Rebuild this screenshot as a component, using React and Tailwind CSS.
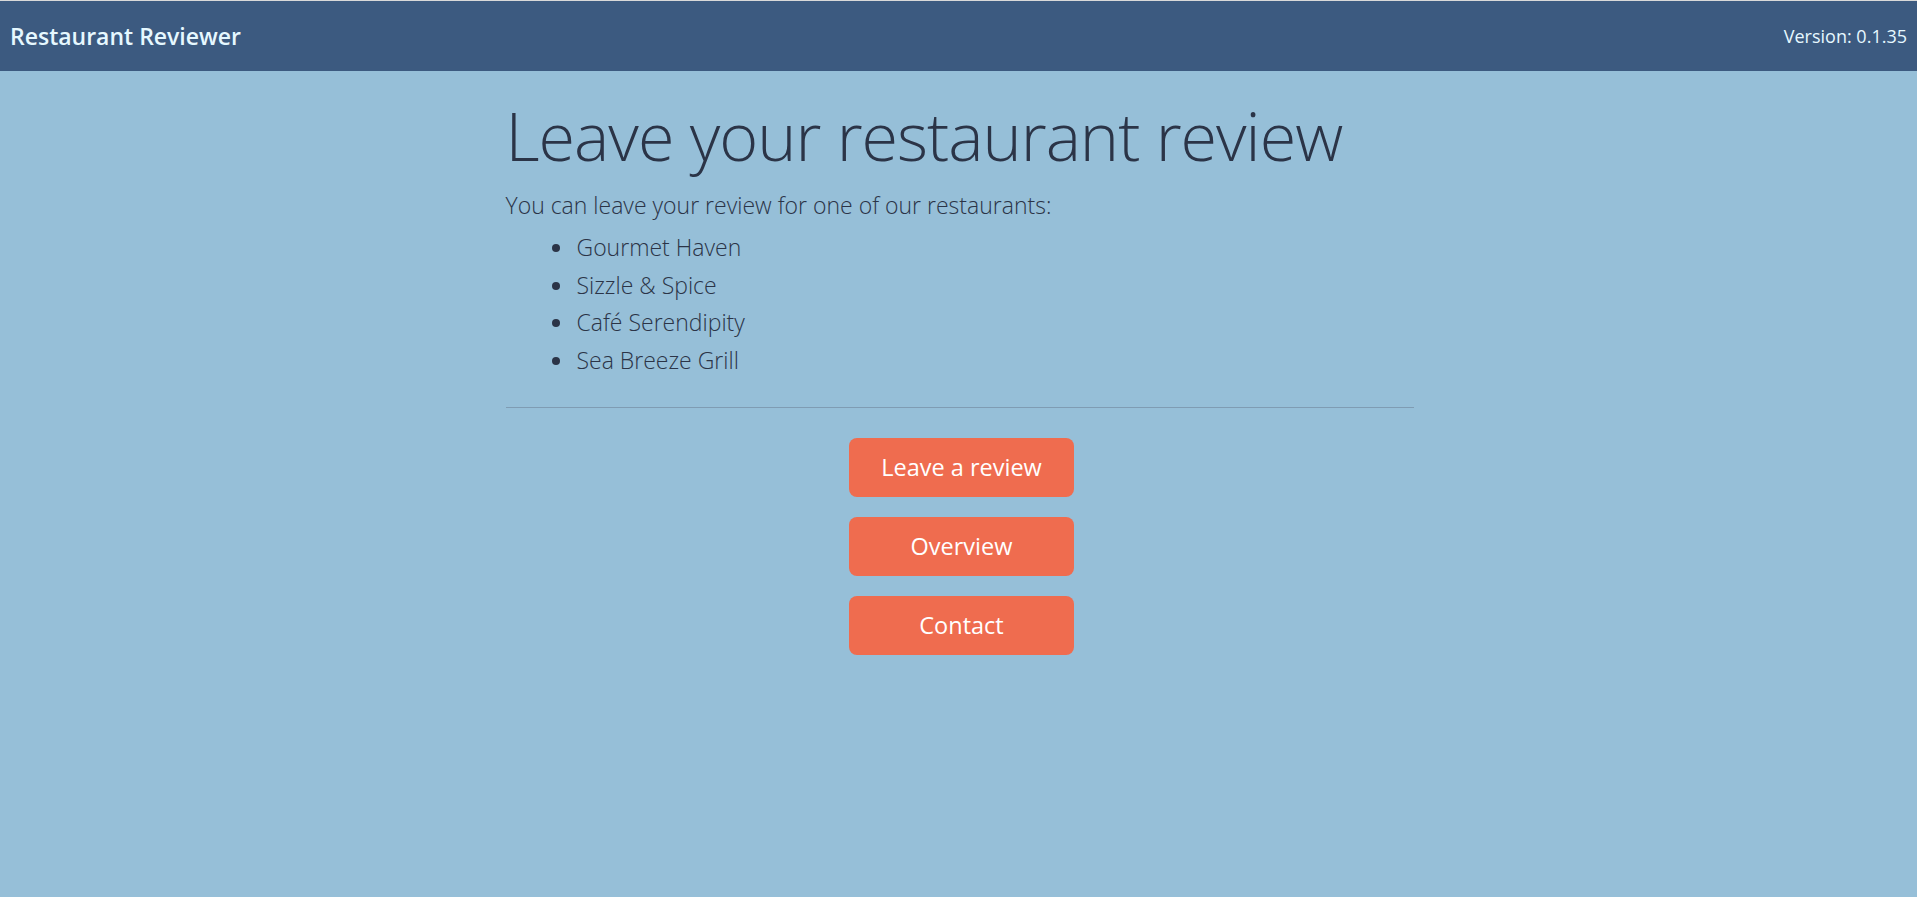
const restaurants = ['Gourmet Haven', 'Sizzle & Spice', 'Café Serendipity', 'Sea Breeze Grill'];

export default function App() {
    return (
        <div className="min-h-[897px] bg-[#96bfd8] font-['Open_Sans',sans-serif] border-t border-[#d9d9d9]">
            {/* Header */}
            <header className="h-[70px] bg-[#3c5a80] flex items-center justify-between px-[10px] text-[#e6f8ff]">
                <span className="text-[23px] font-semibold">Restaurant Reviewer</span>
                <span className="text-[18px]">Version: 0.1.35</span>
            </header>

            {/* Main Content */}
            <main className="w-[910px] mx-auto pl-[2px] pt-[31px] text-[#2b3447]">
                <h1 className="text-[66.5px] font-light leading-none tracking-[-1px]">
                    Leave your restaurant review
                </h1>
                <p className="mt-[19px] text-[23px] font-light">
                    You can leave your review for one of our restaurants:
                </p>
                <ul className="mt-[7px] list-disc pl-[69px] text-[23px] font-light leading-[37.5px] marker:text-[#2b3447]">
                    {restaurants.map((name) => (
                        <li key={name} className="pl-[2px]">{name}</li>
                    ))}
                </ul>
                <hr className="mt-[28px] border-[#7f9cb3]" />

                <div className="flex flex-col items-center gap-[20px] mt-[30px] pl-[4px]">
                    {['Leave a review', 'Overview', 'Contact'].map((label) => (
                        <button
                            key={label}
                            className="w-[225px] h-[59px] rounded-[8px] bg-[#ef6c4f] text-white text-[23.5px]"
                        >
                            {label}
                        </button>
                    ))}
                </div>
            </main>
        </div>
    );
}
